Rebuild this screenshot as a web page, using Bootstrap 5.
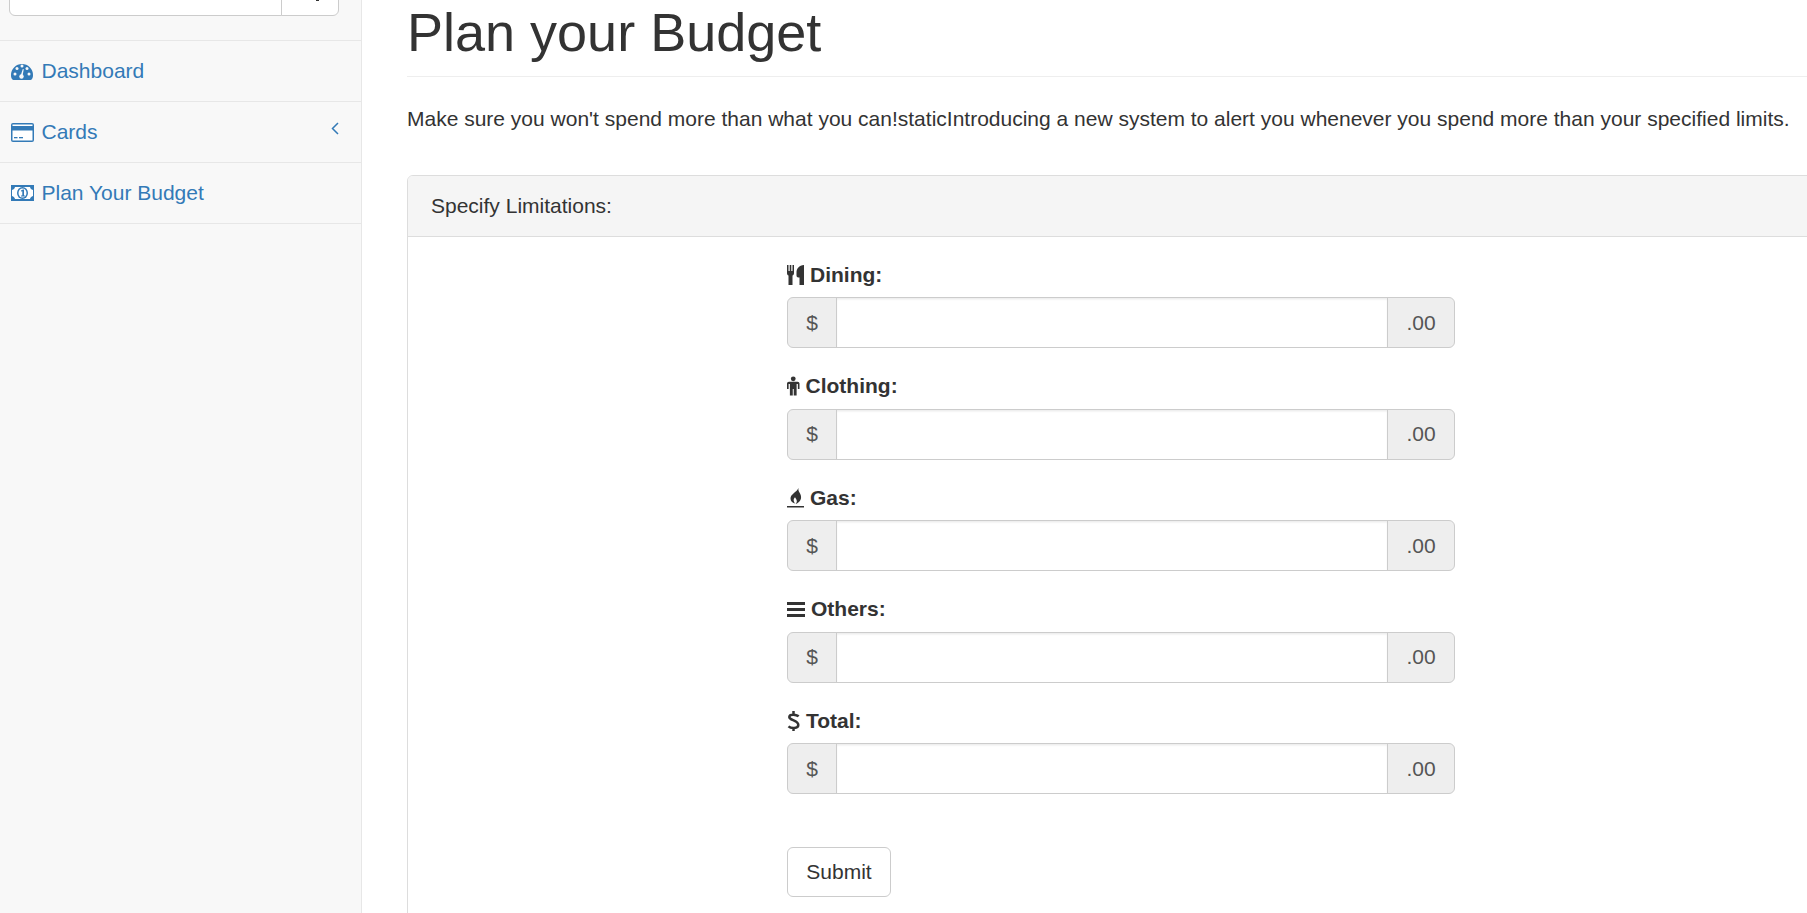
<!DOCTYPE html>
<html lang="en">
<head>
    <meta charset="UTF-8">
    <title>Plan your Budget</title>
    <link href="https://cdn.jsdelivr.net/npm/bootstrap@5.3.3/dist/css/bootstrap.min.css" rel="stylesheet">
    <style>
        html, body { height: 913px; overflow: hidden; }
        body { font-family: "Liberation Sans", Arial, sans-serif; font-size: 21px; line-height: 30px; color: #333; background: #fff; }

        /* sidebar */
        .side-panel { width: 362px; flex-shrink: 0; background: #f8f8f8; border-right: 1px solid #e7e7e7; }
        .side-search { height: 41px; overflow: hidden; padding: 0 22px 24px 9px; border-bottom: 1px solid #e7e7e7; display: flex; align-items: flex-end; }
        .side-search .form-control { height: 51px; width: 273px; flex: none; border-radius: 6px 0 0 6px; border-color: #ccc; }
        .side-search .btn { height: 49px; width: 58px; flex: none; margin-left: -1px; background: #fff; border: 1px solid #ccc; border-radius: 0 6px 6px 0; padding: 0 0 14px 15px; display: flex; align-items: flex-end; justify-content: center; }
        .side-search .btn svg { display: block; }
        .side-link { display: flex; align-items: center; height: 61px; padding: 0 22px 0 11px; color: #337ab7; text-decoration: none; border-bottom: 1px solid #e7e7e7; }
        .side-ico { width: 30.5px; flex: none; display: flex; }
        .side-ico svg { display: block; }
        .side-chevron { margin-left: auto; margin-top: -7px; }

        /* main */
        .main-area { padding-left: 45px; flex-shrink: 0; }
        .page-title { width: 1428px; margin: 3px 0 27px; padding-bottom: 14px; border-bottom: 1px solid #eee; font-size: 54px; line-height: 59.4px; font-weight: 500; color: #333; }
        .page-intro { margin: 0 0 41px; white-space: nowrap; }
        .budget-panel { width: 1428px; border: 1px solid #ddd; border-radius: 6px; color: #333; }
        .budget-panel .card-header { height: 61px; padding: 0 23px; line-height: 59px; background: #f5f5f5; border-bottom: 1px solid #ddd; }
        .budget-panel .card-body { padding: 22.5px 0 60px; }
        .budget-form { width: 668px; }
        .limit-group { margin-bottom: 23px; }
        .limit-label { display: flex; align-items: center; font-weight: 700; margin-bottom: 7.5px; height: 30px; }
        .limit-label svg { flex: none; margin-right: 6px; }
        .budget-form .input-group-text { font-size: 21px; line-height: 30px; color: #555; background: #eee; border-color: #ccc; border-radius: 6px; padding: 0; justify-content: center; }
        .addon-dollar { width: 50px; }
        .addon-cents { width: 68px; }
        .budget-form .form-control { height: 51px; border-color: #ccc; box-shadow: inset 0 1.5px 1.5px rgba(0,0,0,.075); }
        .submit-btn { margin-top: 30px; width: 104px; height: 50px; padding: 0; font-size: 21px; line-height: 30px; color: #333; background: #fff; border: 1px solid #ccc; border-radius: 6px; }
    </style>
</head>
<body class="d-flex">
    <aside class="side-panel">
        <div class="side-search">
            <input type="text" class="form-control">
            <button class="btn" type="button" aria-label="Search">
                <svg width="3" height="2" viewBox="0 0 3 2"><rect width="3" height="2" fill="#333"/></svg>
            </button>
        </div>
        <a class="side-link" href="#">
            <span class="side-ico">
                <svg width="22" height="18" viewBox="0 0 22 18"><path fill="#337ab7" d="M0 13a11 11 0 0 1 22 0c0 2-.4 3.400-1.200 4.300-.3.400-.7.700-1.300.7h-17c-.6 0-1-.3-1.300-.7C.4 16.400 0 15 0 13z"/><g fill="#f8f8f8"><circle cx="4" cy="12" r="1.500"/><circle cx="6" cy="6.500" r="1.500"/><circle cx="11" cy="4" r="1.500"/><circle cx="16" cy="6.500" r="1.500"/><circle cx="18" cy="12" r="1.500"/><circle cx="10.500" cy="14.500" r="2.200"/><path d="M9.500 14l2.300-7 1 .3-1.400 7.200z"/></g></svg>
            </span>
            Dashboard
        </a>
        <a class="side-link" href="#">
            <span class="side-ico">
                <svg width="23" height="19" viewBox="0 0 23 19"><rect width="23" height="19" rx="2" fill="#337ab7"/><rect x="1.500" y="1.500" width="20" height="1.500" fill="#fff"/><rect x="1.500" y="7.500" width="20" height="10" fill="#fff"/><rect x="3" y="14" width="3.500" height="1.300" fill="#337ab7"/><rect x="8" y="14" width="4" height="1.300" fill="#337ab7"/></svg>
            </span>
            Cards
            <svg class="side-chevron" width="8" height="13" viewBox="0 0 8 13"><path d="M7 1L1.500 6.500 7 12" fill="none" stroke="#337ab7" stroke-width="1.500"/></svg>
        </a>
        <a class="side-link" href="#">
            <span class="side-ico">
                <svg width="23" height="16" viewBox="0 0 23 16"><rect width="23" height="16" fill="#337ab7"/><path fill="#fff" d="M4 2h15c.3 1.500 1.300 2.500 3 3v6c-1.700.5-2.700 1.500-3 3H4c-.3-1.500-1.300-2.500-3-3V5c1.700-.5 2.700-1.500 3-3z"/><ellipse cx="11.500" cy="8" rx="5.500" ry="6" fill="#337ab7"/><ellipse cx="11.500" cy="8" rx="4" ry="4.500" fill="#fff"/><path fill="#337ab7" d="M10 5.500l2-1h1v6h1v1h-4v-1h1.300V6.300l-1.300.3z"/></svg>
            </span>
            Plan Your Budget
        </a>
    </aside>

    <main class="main-area">
        <h1 class="page-title">Plan your Budget</h1>
        <p class="page-intro">Make sure you won't spend more than what you can!staticIntroducing a new system to alert you whenever you spend more than your specified limits.</p>

        <div class="card budget-panel">
            <div class="card-header">Specify Limitations:</div>
            <div class="card-body">
                <form class="budget-form mx-auto">
                    <div class="limit-group">
                        <label class="limit-label">
                            <svg width="17" height="20" viewBox="0 0 17 20"><path fill="#333" d="M0 0h1.500v6h1.200V0h1.600v6h1.200V0H7v8c0 1.300-.7 2.200-1.500 2.600V20h-4v-9.400C.7 10.200 0 9.300 0 8z"/><path fill="#333" d="M9.500 7.500C9.500 3.500 12 .5 17 0v20h-4.500v-7.500H11.500c-1.300 0-2-.7-2-2z"/></svg>
                            <span>Dining:</span>
                        </label>
                        <div class="input-group">
                            <span class="input-group-text addon-dollar">$</span>
                            <input type="text" class="form-control">
                            <span class="input-group-text addon-cents">.00</span>
                        </div>
                    </div>
                    <div class="limit-group">
                        <label class="limit-label">
                            <svg width="12.500" height="20" viewBox="0 0 13 20"><circle cx="6.500" cy="2.500" r="2.500" fill="#333"/><path fill="#333" d="M2 5.500h9c1.200 0 2 .8 2 2V13h-1.700V8h-1.300v12H7v-7H6v7H3V8H1.700v5H0V7.500c0-1.200.8-2 2-2z"/></svg>
                            <span>Clothing:</span>
                        </label>
                        <div class="input-group">
                            <span class="input-group-text addon-dollar">$</span>
                            <input type="text" class="form-control">
                            <span class="input-group-text addon-cents">.00</span>
                        </div>
                    </div>
                    <div class="limit-group">
                        <label class="limit-label">
                            <svg width="17" height="20" viewBox="0 0 17 20"><path fill="#333" d="M11.500 0c-.6 2.500.8 4 1.800 6 .9 2 1.200 4.300 0 6.300-1 1.800-2.700 3.200-4.800 3.700 1.300-1.200 1.700-2.800 1-4.300-.4-.9-1-1.500-1.500-2.500-.8 1-1.500 2-1.300 3.400.1 1 .6 2 1.300 2.900C5.300 15 3.500 13 3.500 10.500 3.500 6 9.500 4.500 11.500 0z"/><rect y="18" width="17" height="1.500" fill="#333"/></svg>
                            <span>Gas:</span>
                        </label>
                        <div class="input-group">
                            <span class="input-group-text addon-dollar">$</span>
                            <input type="text" class="form-control">
                            <span class="input-group-text addon-cents">.00</span>
                        </div>
                    </div>
                    <div class="limit-group">
                        <label class="limit-label">
                            <svg width="18" height="15" viewBox="0 0 18 15"><path fill="#333" d="M0 0h18v3H0zM0 6h18v3H0zM0 12h18v3H0z"/></svg>
                            <span>Others:</span>
                        </label>
                        <div class="input-group">
                            <span class="input-group-text addon-dollar">$</span>
                            <input type="text" class="form-control">
                            <span class="input-group-text addon-cents">.00</span>
                        </div>
                    </div>
                    <div class="limit-group">
                        <label class="limit-label">
                            <svg width="13" height="20" viewBox="0 0 13 20"><path d="M11.500 5.500C10 3.500 2.500 2.500 2.300 6c-.2 3.500 9 3 9 8 0 3.800-7.500 3.500-9.800 1.300M6.500 0v3.500M6.500 16.500V20" fill="none" stroke="#333" stroke-width="2.500"/></svg>
                            <span>Total:</span>
                        </label>
                        <div class="input-group">
                            <span class="input-group-text addon-dollar">$</span>
                            <input type="text" class="form-control">
                            <span class="input-group-text addon-cents">.00</span>
                        </div>
                    </div>
                    <button type="button" class="btn submit-btn">Submit</button>
                </form>
            </div>
        </div>
    </main>
    <script src="https://cdn.jsdelivr.net/npm/bootstrap@5.3.3/dist/js/bootstrap.bundle.min.js"></script>
</body>
</html>
